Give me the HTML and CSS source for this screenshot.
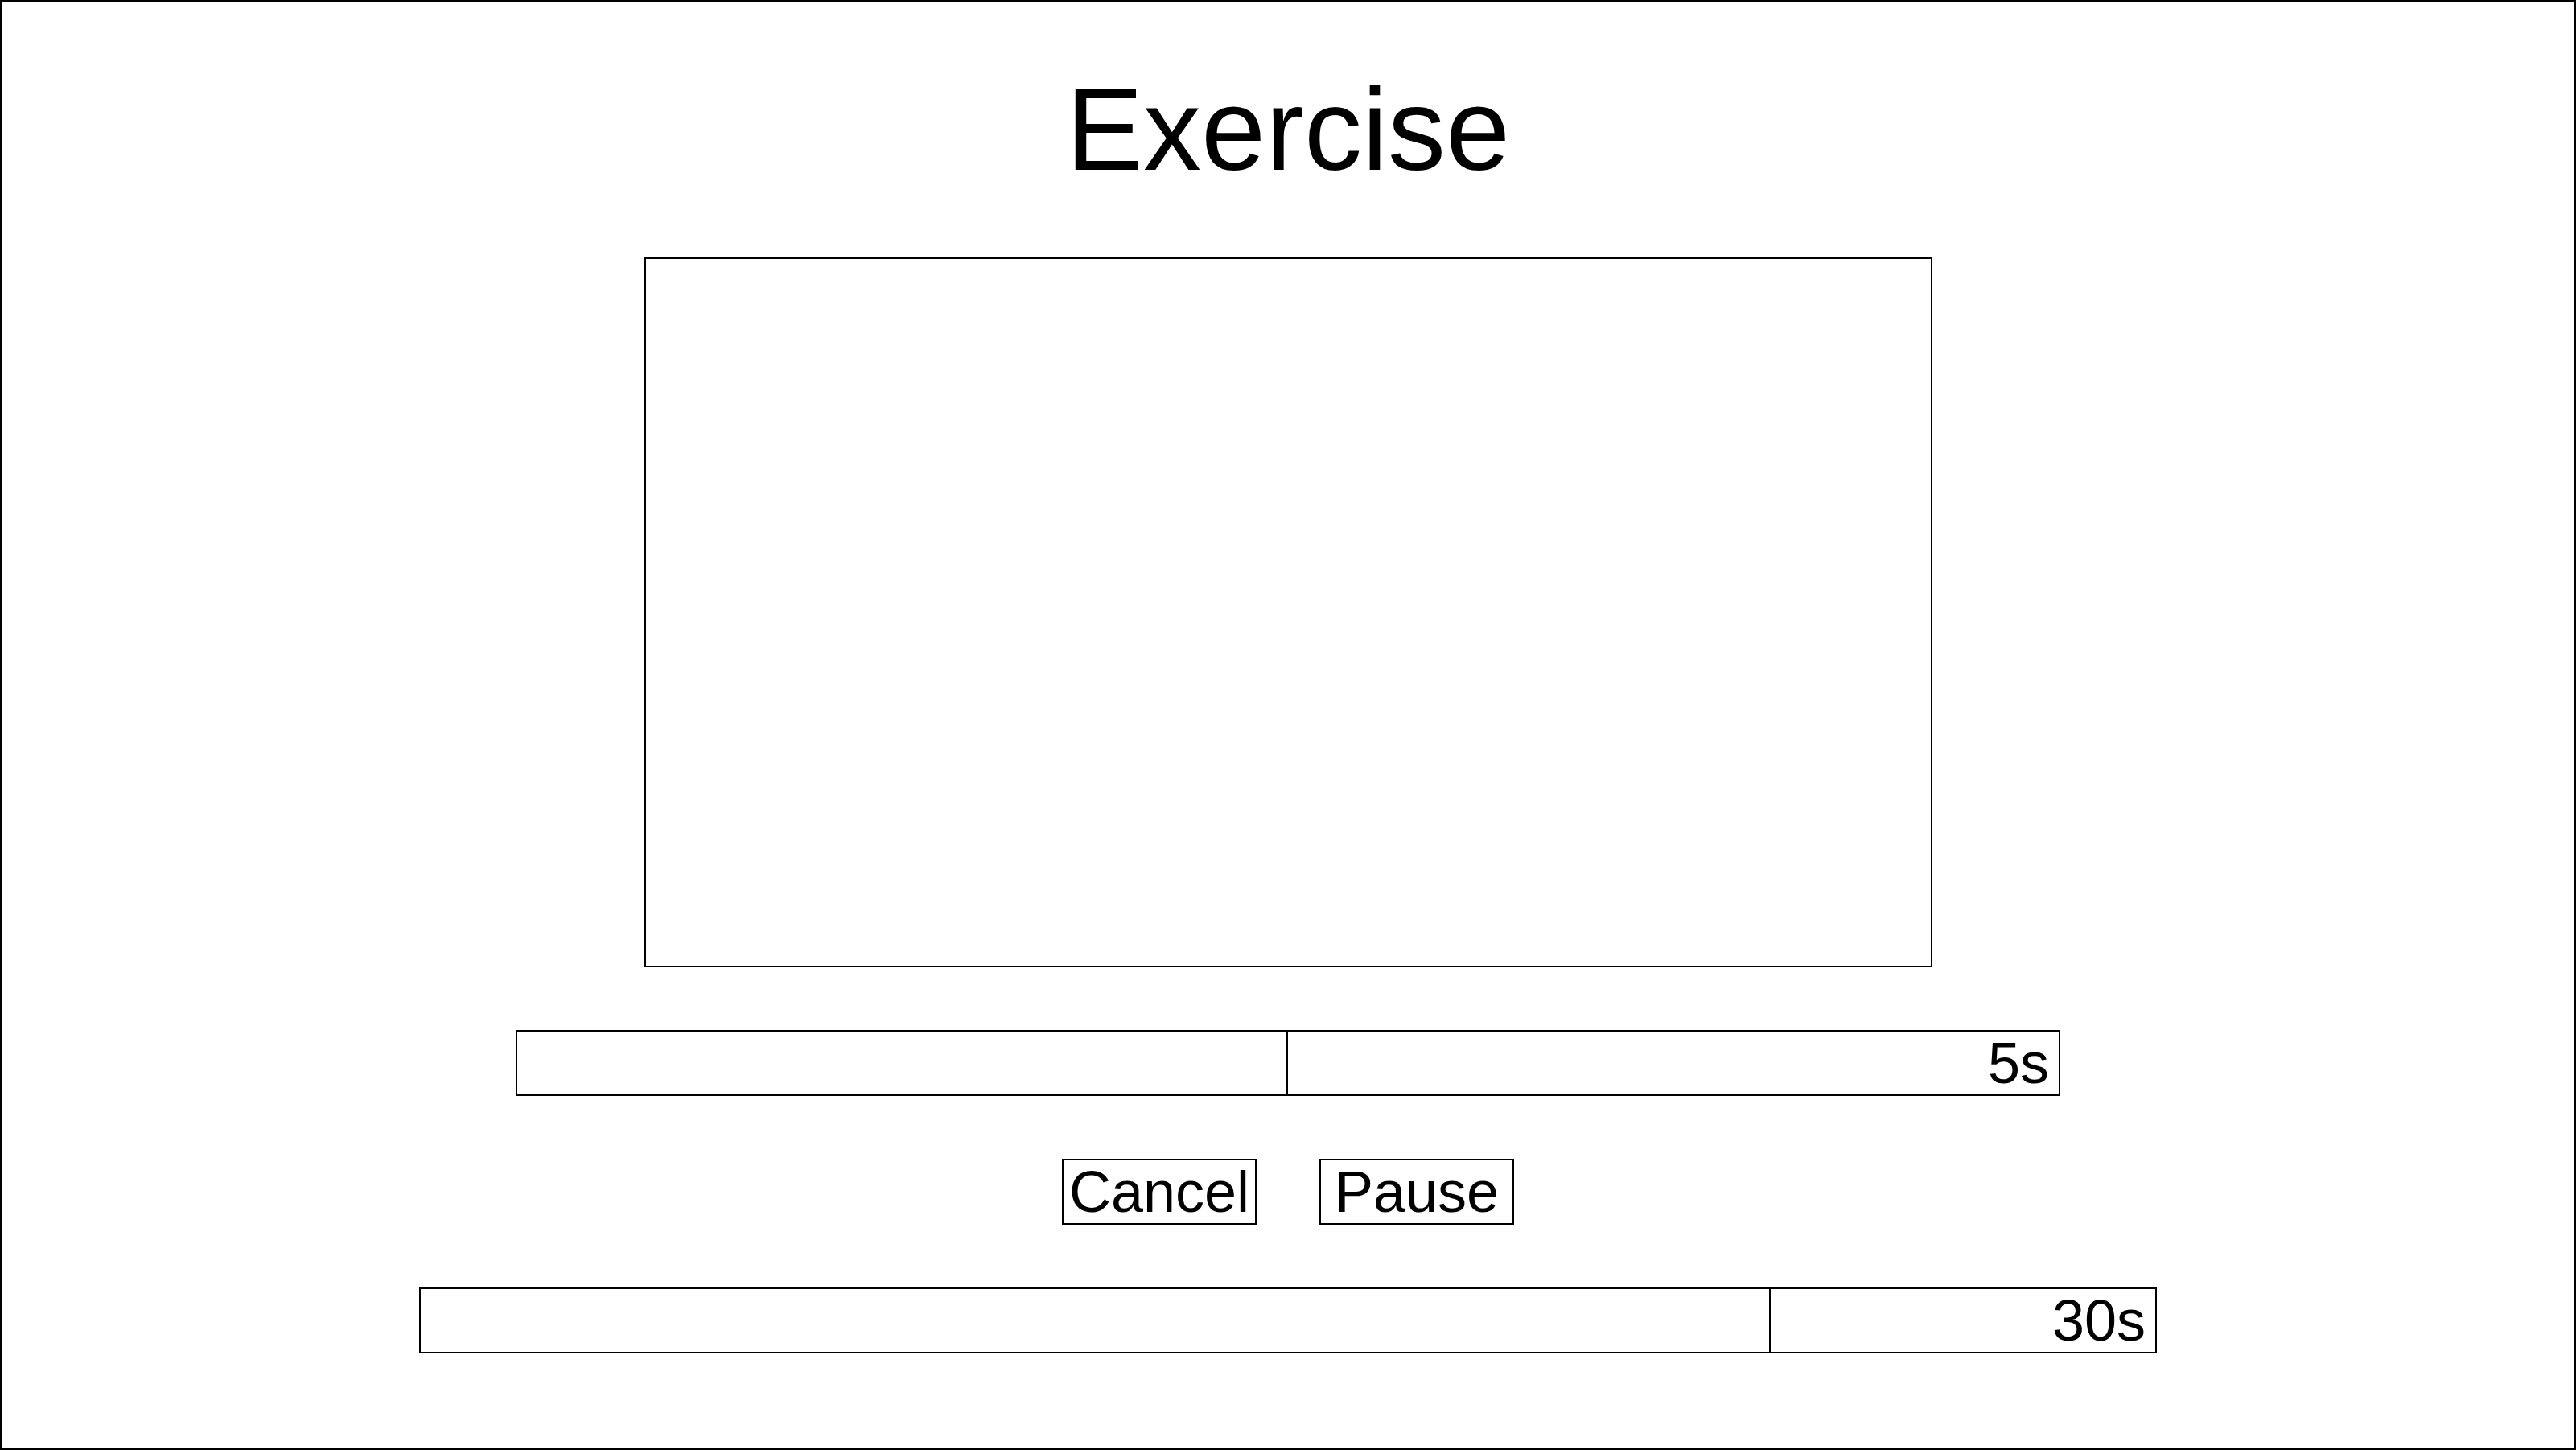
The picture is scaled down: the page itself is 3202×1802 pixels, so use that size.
FILE: index.html
```html
<!DOCTYPE html>
<html lang="en">
<head>
<meta charset="utf-8">
<title>Exercise</title>
<link rel="stylesheet" href="styles.css">
</head>
<body>
<main class="screen">
  <h1 class="title">Exercise</h1>
  <div class="video"></div>
  <div class="bar bar-short">
    <div class="bar-fill" style="width: 50%"></div>
    <div class="bar-rest">5s</div>
  </div>
  <div class="actions">
    <button class="btn" type="button">Cancel</button>
    <button class="btn" type="button">Pause</button>
  </div>
  <div class="bar bar-long">
    <div class="bar-fill" style="width: 77.85%"></div>
    <div class="bar-rest">30s</div>
  </div>
</main>
</body>
</html>
```
FILE: styles.css
```css
* {
  box-sizing: border-box;
}

html, body {
  margin: 0;
  padding: 0;
  background: #fff;
}

body {
  font-family: "Liberation Sans", Arial, sans-serif;
  color: #000;
}

.screen {
  width: 100vw;
  height: 100vh;
  border: 2px solid #000;
  display: flex;
  flex-direction: column;
  align-items: center;
  padding-top: 88px;
}

.title {
  margin: 0;
  font-size: 144px;
  font-weight: normal;
  line-height: 144px;
}

.video {
  margin-top: 86px;
  width: 1601px;
  height: 882px;
  border: 2px solid #000;
}

.bar {
  display: flex;
  height: 82px;
  border: 2px solid #000;
  margin-top: 78px;
}

.bar-short {
  width: 1920px;
}

.bar-long {
  width: 2160px;
}

.bar-fill {
  flex: none;
  height: 100%;
  border-right: 2px solid #000;
}

.bar-rest {
  flex: 1;
  font-size: 72px;
  line-height: 78px;
  text-align: right;
  padding-right: 12px;
}

.actions {
  display: flex;
  gap: 78px;
  margin-top: 78px;
}

.btn {
  width: 242px;
  height: 82px;
  margin: 0;
  padding: 0;
  border: 2px solid #000;
  border-radius: 0;
  background: #fff;
  color: #000;
  font-family: "Liberation Sans", Arial, sans-serif;
  font-size: 72px;
  line-height: 78px;
  text-align: center;
}
```
